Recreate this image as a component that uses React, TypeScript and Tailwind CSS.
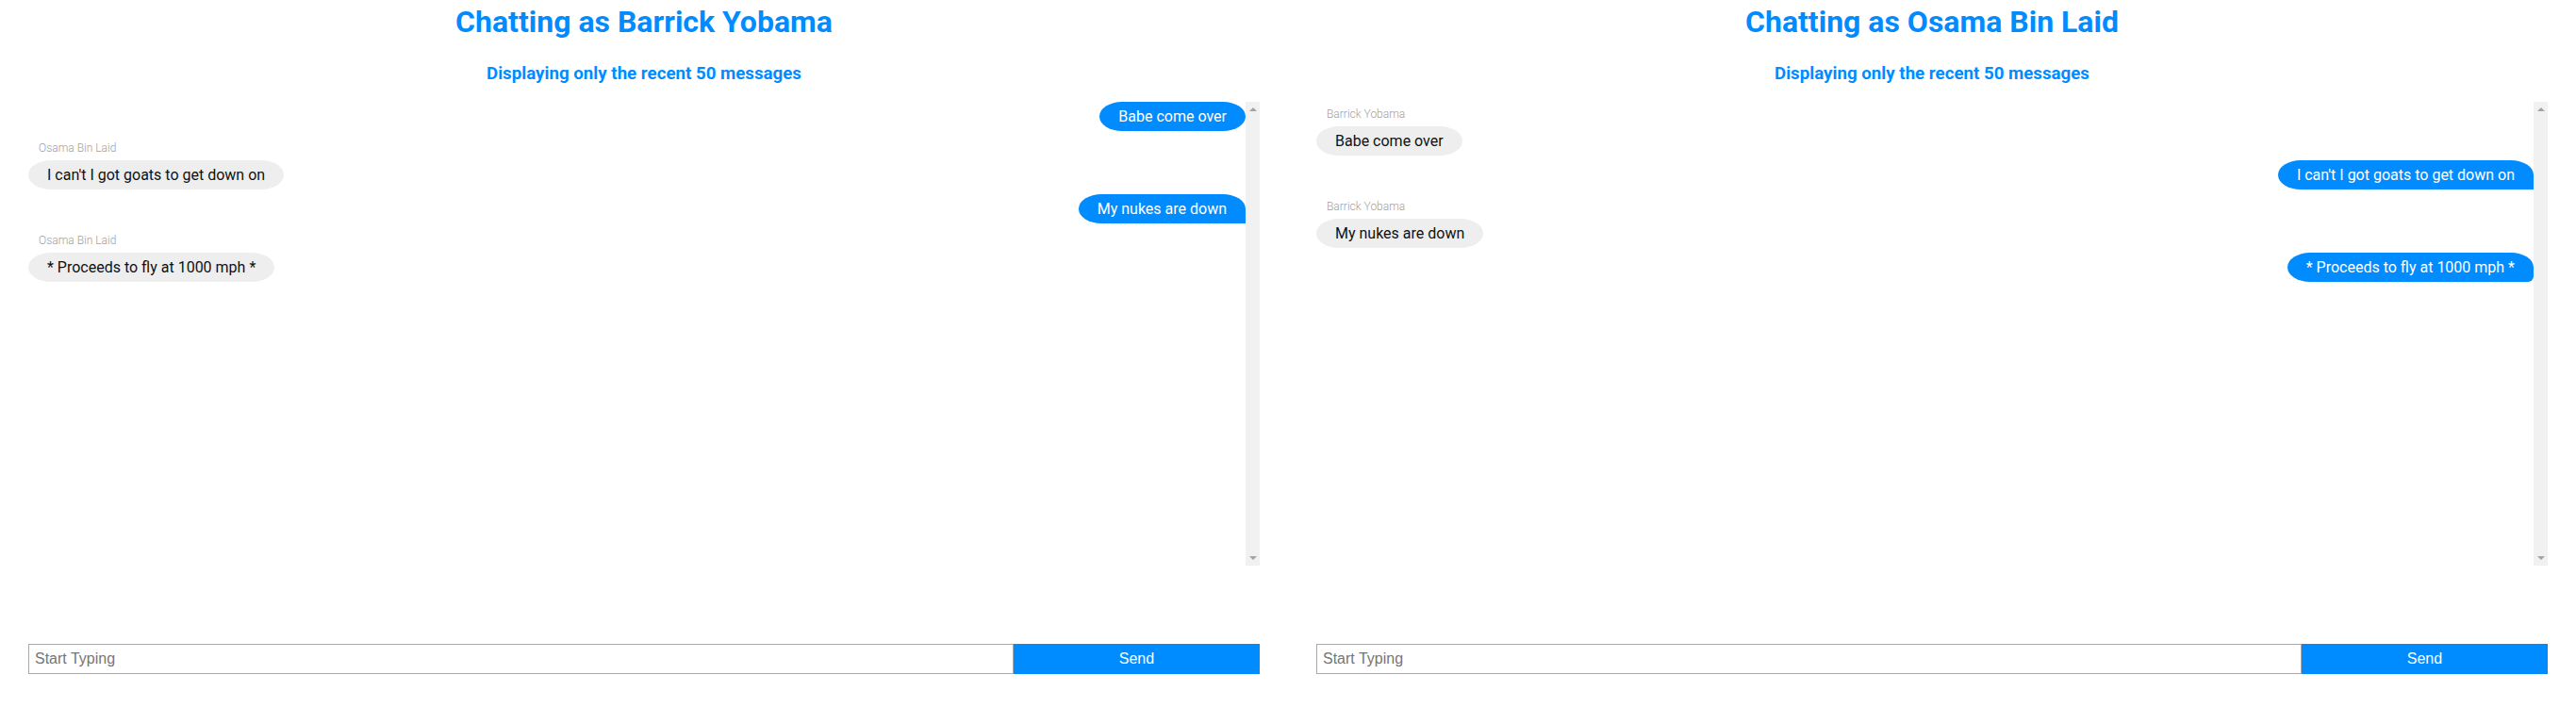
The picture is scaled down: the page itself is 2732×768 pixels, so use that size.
import React from "react"

type Msg = { from: string; text: string; corner?: string }

const ChatPanel = ({ me, messages }: { me: string; messages: Msg[] }) => {
  return (
    <section className="flex h-[768px] w-1/2 flex-col px-[30px] font-['Roboto',sans-serif]">
      <h1 className="pt-[5px] text-center text-[32px] font-bold leading-[36px] text-[#008cff]">
        Chatting as {me}
      </h1>
      <h3 className="mt-[26px] text-center text-[18.72px] font-bold leading-[22px] text-[#008cff]">
        Displaying only the recent 50 messages
      </h3>

      <div className="mt-[19px] flex h-[492px]">
        <div className="flex flex-1 flex-col">
          {messages.map((m, i) =>
            m.from === me ? (
              <div key={i} className="mb-[5px] flex justify-end">
                <span
                  className={
                    "rounded-[24px_/_15.5px] bg-[#008cff] px-[20px] py-[6px] text-[16px] leading-[19px] text-white " +
                    (m.corner ?? "")
                  }
                >
                  {m.text}
                </span>
              </div>
            ) : (
              <div key={i} className="mb-[5px] flex flex-col items-start">
                <span className="pl-[11px] pt-[6px] pb-[6px] text-[12px] font-light leading-[14px] text-[#a0a0a0]">
                  {m.from}
                </span>
                <span className="rounded-[24px_/_15.5px] bg-[#eeeeee] px-[20px] py-[6px] text-[16px] leading-[19px] text-[#111]">
                  {m.text}
                </span>
              </div>
            )
          )}
        </div>
        {/* fake scrollbar */}
        <div className="flex w-[15px] flex-col items-center justify-between bg-[#f1f1f1] py-[6px]">
          <span className="h-0 w-0 border-x-[4px] border-b-[4px] border-x-transparent border-b-[#a3a3a3]" />
          <span className="h-0 w-0 border-x-[4px] border-t-[4px] border-x-transparent border-t-[#a3a3a3]" />
        </div>
      </div>

      <form
        className="mt-[83px] flex h-[32px] font-['Liberation_Sans',Arial,sans-serif]"
        onSubmit={(e) => e.preventDefault()}
      >
        <input
          type="text"
          placeholder="Start Typing"
          className="w-4/5 border border-[#a9a9a9] px-[6px] text-[16px] text-black outline-none placeholder:text-[#757575]"
        />
        <button className="w-1/5 bg-[#008cff] text-[16px] text-white">
          Send
        </button>
      </form>
    </section>
  )
}

const App = () => {
  const convo = [
    { from: "Barrick Yobama", text: "Babe come over" },
    { from: "Osama Bin Laid", text: "I can't I got goats to get down on" },
    { from: "Barrick Yobama", text: "My nukes are down" },
    { from: "Osama Bin Laid", text: "* Proceeds to fly at 1000 mph *" },
  ]
  const left: Msg[] = convo.map((m, i) => ({
    ...m,
    corner: i === 2 ? "rounded-br-none" : "",
  }))
  const right: Msg[] = convo.map((m, i) => ({
    ...m,
    corner: i === 1 ? "rounded-br-none" : i === 3 ? "rounded-br-[6px]" : "",
  }))

  return (
    <main className="flex min-h-screen w-full bg-white">
      <ChatPanel me="Barrick Yobama" messages={left} />
      <ChatPanel me="Osama Bin Laid" messages={right} />
    </main>
  )
}

export default App
